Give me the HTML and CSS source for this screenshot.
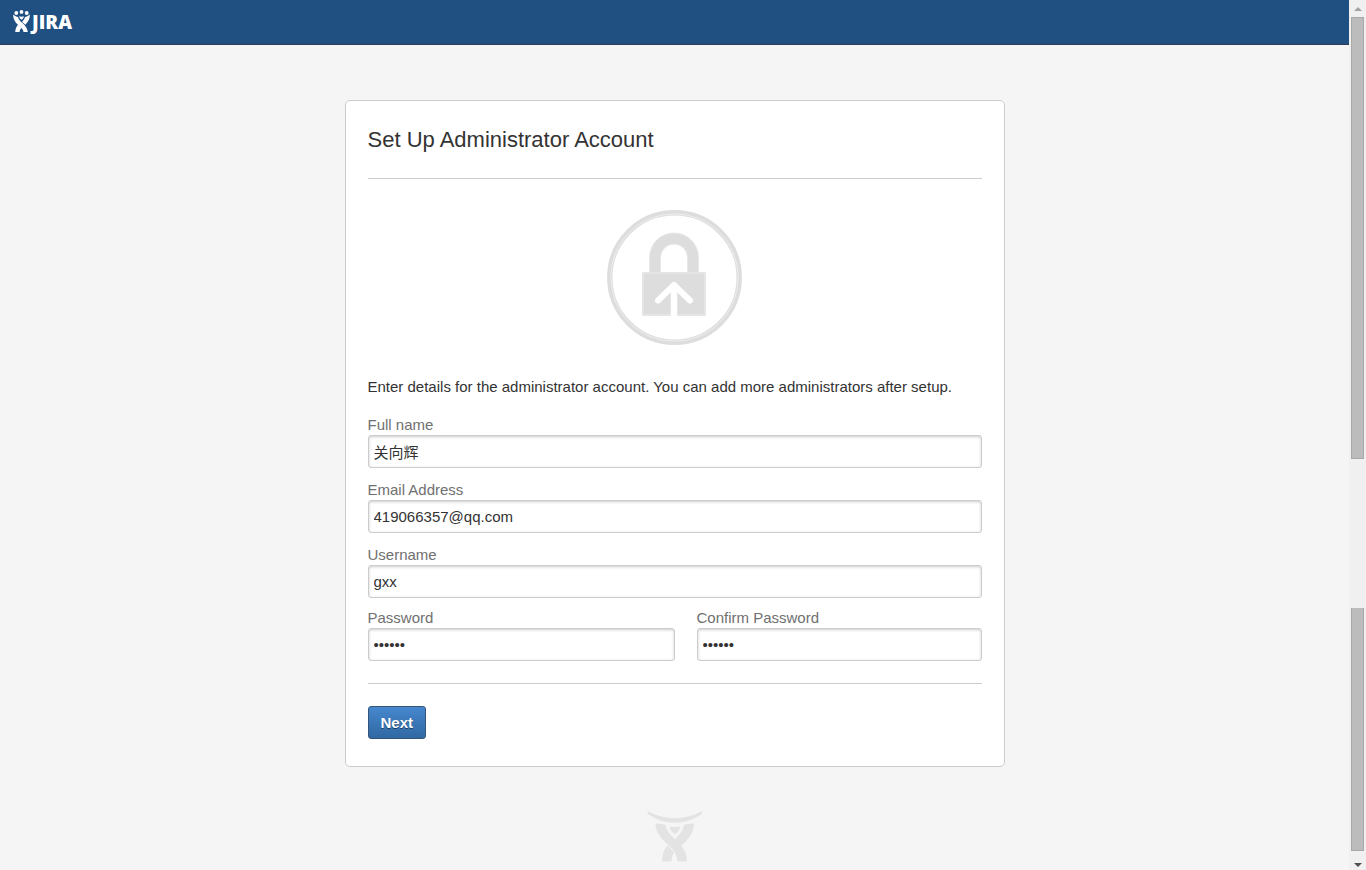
FILE: index.html
```html
<!DOCTYPE html>
<html lang="en">
<head>
    <meta charset="UTF-8">
    <meta name="viewport" content="width=device-width, initial-scale=1.0">
    <title>JIRA Setup - Set Up Administrator Account</title>
    <link rel="stylesheet" href="styles.css">
</head>
<body>

    <div class="page">
        <header class="header">
            <a href="#" class="logo">
                <svg class="logo-mark" width="19" height="24" viewBox="0 0 19 24" fill="#fff">
                    <circle cx="4.300" cy="3" r="1.900"/>
                    <circle cx="9.500" cy="1.900" r="1.900"/>
                    <circle cx="14.700" cy="3" r="1.900"/>
                    <path d="M7.200 6.300c1.500 .6 3.100 .6 4.600 0c0 1.600-.9 2.700-2.300 3.500c-1.400-.8-2.300-1.900-2.300-3.500z"/>
                    <path d="M1.200 4.500C3 6.300 4.500 6.600 6 7c.5 2.600 2.200 4 4.500 6.100c2.900 2.600 4.700 4.900 5.300 8.900H11.500c-.3-2.500-1.800-4-3.900-5.800C3.800 13 1 9.500 1.200 4.500z"/>
                    <path d="M17.800 4.500C16 6.300 14.500 6.600 13 7c-.4 2-1.500 3.300-3 4.800l3.200 3C16 11.800 18 9 17.800 4.500zM6 14.800C4.200 16.600 3.500 19 3.200 22H7.500c.2-1.700 .9-3 2-4.200z"/>
                </svg>
                <span class="logo-text">JIRA</span>
            </a>
        </header>

        <main class="content">
            <section class="card">
                <h1>Set Up Administrator Account</h1>

                <svg class="lock-icon" width="135" height="135" viewBox="0 0 135 135" fill="none">
                    <circle cx="67.500" cy="67.500" r="64.700" stroke="#ddd" stroke-width="5.400"/>
                    <circle cx="67.500" cy="67.500" r="63.700" stroke="#eee" stroke-width="1"/>
                    <path d="M42.500 63V47.500a24.500 24.500 0 0 1 49 0V63H80.500V47.500a13.500 13.500 0 0 0-27 0V63z" fill="#ddd" stroke="#e8e8e8" stroke-width="1"/>
                    <rect x="35" y="62" width="64" height="44" rx="2" fill="#ddd"/>
                    <rect x="36" y="63" width="62" height="42" rx="1" stroke="#ededed" stroke-width="1"/>
                    <path d="M67 76V107" stroke="#fff" stroke-width="6.500"/>
                    <path d="M51 90.500L67 75L83 90.500" stroke="#fff" stroke-width="6" stroke-linecap="round" stroke-linejoin="round"/>
                </svg>

                <form action="#" method="post">
                    <p class="description">Enter details for the administrator account. You can add more administrators after setup.</p>

                    <div class="field">
                        <label for="fullname">Full name</label>
                        <input type="text" id="fullname" name="fullname" value="关向辉">
                    </div>
                    <div class="field">
                        <label for="email">Email Address</label>
                        <input type="text" id="email" name="email" value="419066357@qq.com">
                    </div>
                    <div class="field">
                        <label for="username">Username</label>
                        <input type="text" id="username" name="username" value="gxx">
                    </div>
                    <div class="field-row">
                        <div class="field field-half">
                            <label for="password">Password</label>
                            <input type="password" id="password" name="password" value="123456">
                        </div>
                        <div class="field field-rest">
                            <label for="confirm">Confirm Password</label>
                            <input type="password" id="confirm" name="confirm" value="123456">
                        </div>
                    </div>

                    <div class="buttons">
                        <button type="submit">Next</button>
                    </div>
                </form>
            </section>
        </main>

        <footer class="footer">
            <svg width="56" height="51" viewBox="0 0 56 51" fill="#e3e3e3">
                <path d="M1.500 .5C18 9.500 38 9.500 54 .5c1.200 .5 1.500 1.300 1 2C39 14.800 17 14.800 .5 2.500c-.5-.7-.2-1.500 1-2z"/>
                <path d="M24 15.500c2.600 .8 5.200 .8 7.800 0c1.100 0 1.400 .6 1.200 1.500c-.7 2.700-2.600 4.500-5.100 6c-2.500-1.500-4.400-3.300-5.100-6c-.2-.9 .1-1.500 1.200-1.500z"/>
                <path d="M10 12.500l7 1c1 0 1.500 .4 1.700 1.300C20 20.500 23.500 24 29 29.200C36 35.500 39.500 41 40 49c0 1-.4 1.500-1.400 1.500h-6.800c-1 0-1.500-.5-1.500-1.500C30 42.500 26.500 38.600 21 33.700C13.500 27 9.500 22 8.500 14c0-1 .5-1.500 1.500-1.500z"/>
                <path d="M45.500 12.500l-7 1c-1 0-1.500 .4-1.700 1.300C35.500 20.500 33 23.500 28 28.200l6.500 6.500C42 27.700 46 22 47 14c0-1-.5-1.500-1.500-1.500zM20.500 34.500C17 38.500 15.300 43.500 15 49c0 1 .4 1.500 1.400 1.500h6.800c1 0 1.500-.5 1.500-1.500c.1-3.200 .8-5.500 2.300-8z"/>
            </svg>
        </footer>
    </div>

    <div class="scrollbar" aria-hidden="true">
        <span class="arrow arrow-up"></span>
        <span class="thumb thumb-top"></span>
        <span class="track"></span>
        <span class="thumb thumb-bottom"></span>
        <span class="arrow arrow-down"></span>
    </div>

</body>
</html>
```

FILE: styles.css
```css
* {
    box-sizing: border-box;
}
body {
    display: flex;
    height: 100vh;
    margin: 0;
    overflow: hidden;
    background: #f5f5f5;
    color: #333;
    font-family: "Liberation Sans", Arial, "Noto Sans CJK SC", sans-serif;
    font-size: 15px;
    line-height: 20px;
}
.page {
    flex: 1;
    overflow: hidden;
}

/* header */
.header {
    display: flex;
    align-items: center;
    height: 45px;
    padding: 0 12px;
    background: #205081;
    border-bottom: 1px solid #2e3d54;
}
.logo {
    display: flex;
    align-items: center;
    gap: 1px;
    color: #fff;
    text-decoration: none;
}
.logo-text {
    font-family: "Open Sans", sans-serif;
    font-size: 19px;
    font-weight: 800;
    line-height: 24px;
}

/* card */
.content {
    padding: 55px 20px 44px;
}
.card {
    max-width: 660px;
    margin: 0 auto;
    padding: 26px 22px 27px;
    background: #fff;
    border: 1px solid #ccc;
    border-radius: 5px;
}
h1 {
    margin: 0;
    padding-bottom: 26px;
    border-bottom: 1px solid #ccc;
    font-size: 22px;
    font-weight: normal;
    line-height: 25px;
}
.lock-icon {
    display: block;
    margin: 31px auto 32px;
}
.description {
    margin: 0 0 18px;
}
.field {
    margin-bottom: 12px;
}
label {
    display: block;
    color: #707070;
}
input {
    display: block;
    width: 100%;
    height: 33px;
    padding: 4px 5px;
    border: 1px solid #ccc;
    border-radius: 3px;
    box-shadow: inset 0 1px 3px #ccc;
    background: #fff;
    color: #333;
    font-family: inherit;
    font-size: 15px;
}
.field-row {
    display: flex;
    gap: 22px;
    margin-top: -2px;
}
.field-row .field {
    margin-bottom: 22px;
}
.field-half {
    width: 50%;
}
.field-rest {
    flex: 1;
}
.buttons {
    padding-top: 22px;
    border-top: 1px solid #ccc;
}
button {
    display: block;
    height: 33px;
    padding: 0 12px;
    background: linear-gradient(#4687ce, #3068a2);
    border: 1px solid #345578;
    border-radius: 3px;
    color: #fff;
    font-family: inherit;
    font-size: 15px;
    font-weight: bold;
    text-shadow: 0 1px 0 rgba(0, 0, 0, 0.5);
}

/* footer */
.footer svg {
    display: block;
    margin: 0 auto;
}

/* scrollbar */
.scrollbar {
    display: flex;
    flex-direction: column;
    width: 17px;
    padding: 0 2px;
    background: #f0f0f0;
}
.arrow {
    display: flex;
    align-items: center;
    justify-content: center;
    height: 17px;
}
.arrow::before {
    content: "";
    border: 4px solid transparent;
}
.arrow-up::before {
    border-top: 0;
    border-bottom-color: #a3a3a3;
}
.arrow-down::before {
    border-bottom: 0;
    border-top-color: #505050;
}
.thumb {
    background: #bcbcbc;
    border: 1px solid #a8a8a8;
}
.thumb-top {
    flex: 442;
}
.track {
    flex: 149;
}
.thumb-bottom {
    flex: 243;
    border-top: 0;
}
.arrow-down {
    height: 19px;
    padding-top: 8px;
}
```
